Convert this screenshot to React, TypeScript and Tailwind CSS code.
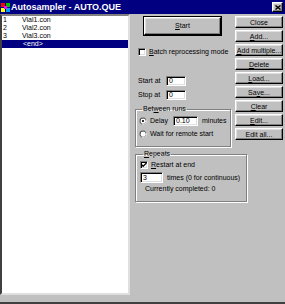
import React from 'react';

const font = { fontFamily: '"Liberation Sans", Arial, sans-serif' };

const bevel =
  'bg-[#c0c0c0] border border-t-white border-l-white border-r-black border-b-black shadow-[inset_-1px_-1px_0_#808080,inset_1px_1px_0_#dfdfdf]';
const sunken =
  'bg-white border border-t-[#808080] border-l-[#808080] border-r-white border-b-white shadow-[inset_1px_1px_0_#000,inset_-1px_-1px_0_#dfdfdf]';

function Mn({ text, at }: { text: string; at: number }) {
  if (at < 0) return <>{text}</>;
  return (
    <>
      {text.slice(0, at)}
      <span className="underline underline-offset-[1px]">{text[at]}</span>
      {text.slice(at + 1)}
    </>
  );
}

function SideButton({ label, at }: { label: string; at: number }) {
  return (
    <button
      type="button"
      className={`${bevel} w-[48px] h-[12px] flex items-center justify-center text-[7px] leading-none text-black`}
    >
      <Mn text={label} at={at} />
    </button>
  );
}

function Check({ checked }: { checked?: boolean }) {
  return (
    <span className={`${sunken} w-[8px] h-[8px] shrink-0 flex items-center justify-center`}>
      {checked && (
        <svg width="6" height="6" viewBox="0 0 7 7">
          <path d="M0.5 3 L2.5 5 L6.5 1" stroke="#000" strokeWidth="1.5" fill="none" />
        </svg>
      )}
    </span>
  );
}

function Radio({ checked }: { checked?: boolean }) {
  return (
    <svg width="8" height="8" viewBox="0 0 12 12" className="shrink-0">
      <circle cx="6" cy="6" r="5.5" fill="#808080" />
      <circle cx="6.5" cy="6.5" r="5" fill="#fff" />
      <circle cx="6" cy="6" r="4.5" fill="#000" />
      <circle cx="6.4" cy="6.4" r="3.9" fill="#dfdfdf" />
      <circle cx="6" cy="6" r="3.6" fill="#fff" />
      {checked && <circle cx="6" cy="6" r="1.6" fill="#000" />}
    </svg>
  );
}

function Group({ title, at, className, children }: { title: string; at: number; className: string; children: React.ReactNode }) {
  return (
    <fieldset className={`border border-[#808080] shadow-[1px_1px_0_#fff,inset_1px_1px_0_#fff] ${className}`}>
      <legend className="ml-[3px] px-[1px] text-[7px] leading-[8px]">
        <Mn text={title} at={at} />
      </legend>
      {children}
    </fieldset>
  );
}

const rows = [
  { n: '1', name: 'Vial1.con' },
  { n: '2', name: 'Vial2.con' },
  { n: '3', name: 'Vial3.con' },
];

export default function App() {
  return (
    <div
      className="w-[285px] h-[304px] bg-[#c0c0c0] flex flex-col overflow-hidden text-black border-b-2 border-b-[#404040]"
      style={font}
    >
      <div className="h-[14px] bg-[#000080] flex items-center pl-[1px] pr-[2px] shrink-0">
        <svg width="9" height="9" viewBox="0 0 9 9" className="shrink-0">
          <rect x="0" y="0" width="4" height="4" fill="#ff0000" />
          <rect x="5" y="0" width="4" height="4" fill="#00c000" />
          <rect x="0" y="5" width="4" height="4" fill="#ffff00" />
          <rect x="5" y="5" width="4" height="4" fill="#00a0ff" />
          <rect x="3" y="3" width="3" height="3" fill="#ff00ff" />
        </svg>
        <span className="ml-[1px] text-white font-bold text-[9px] leading-none">Autosampler - AUTO.QUE</span>
        <span className="flex-1" />
        <span className={`${bevel} w-[11px] h-[10px] flex items-center justify-center`}>
          <svg width="6" height="5" viewBox="0 0 6 5">
            <path d="M0.5 0.5 L5.5 4.5 M5.5 0.5 L0.5 4.5" stroke="#000" strokeWidth="1.4" />
          </svg>
        </span>
      </div>

      <div className="flex flex-1 min-h-0 pb-[7px]">
        <div className="w-[130px] h-full bg-white border-2 border-t-[#808080] border-l-[#404040] border-r-[#dfdfdf] border-b-[#dfdfdf] text-[7px] leading-[8px]">
          {rows.map((r) => (
            <div key={r.n} className="h-[8px] flex">
              <span className="w-[20px] pl-[1px]">{r.n}</span>
              <span>{r.name}</span>
            </div>
          ))}
          <div className="h-[8px] flex bg-[#000080] text-white">
            <span className="w-[21px]" />
            <span>&lt;end&gt;</span>
          </div>
        </div>

        <div className="flex-1 flex flex-col text-[7px] leading-[8px]">
          <div className="flex">
            <div className="w-[105px] flex flex-col">
              <button
                type="button"
                className="mt-[2px] ml-[13px] w-[79px] h-[20px] border border-black flex"
              >
                <span className={`${bevel} flex-1 flex items-center justify-center text-[7px]`}>
                  <Mn text="Start" at={0} />
                </span>
              </button>
              <div className="mt-[11px] ml-[8px] flex items-center gap-[3px] h-[9px]">
                <Check />
                <span>
                  <Mn text="Batch reprocessing mode" at={0} />
                </span>
              </div>
              <div className="mt-[20px] ml-[8px] flex items-center h-[10px]">
                <span className="w-[28px]">Start at</span>
                <span className={`${sunken} w-[20px] h-[10px] pl-[2px] leading-[8px]`}>0</span>
              </div>
              <div className="mt-[4px] ml-[8px] flex items-center h-[10px]">
                <span className="w-[28px]">Stop at</span>
                <span className={`${sunken} w-[20px] h-[10px] pl-[2px] leading-[8px]`}>0</span>
              </div>
              <Group title="Between runs" at={3} className="mt-[5px] ml-[5px] w-[94px] h-[42px] px-[3px]">
                <div className="flex items-center h-[10px] mt-[3px]">
                  <Radio checked />
                  <span className="ml-[3px] w-[23px]">Delay</span>
                  <span className={`${sunken} w-[25px] h-[10px] pl-[2px] leading-[8px]`}>0.10</span>
                  <span className="ml-[4px]">minutes</span>
                </div>
                <div className="flex items-center h-[10px] mt-[3px]">
                  <Radio />
                  <span className="ml-[3px]">Wait for remote start</span>
                </div>
              </Group>
            </div>
            <div className="flex flex-col gap-[2px] pt-[2px]">
              <SideButton label="Close" at={-1} />
              <SideButton label="Add..." at={0} />
              <SideButton label="Add multiple..." at={0} />
              <SideButton label="Delete" at={0} />
              <SideButton label="Load..." at={0} />
              <SideButton label="Save..." at={2} />
              <SideButton label="Clear" at={0} />
              <SideButton label="Edit..." at={0} />
              <SideButton label="Edit all..." at={-1} />
            </div>
          </div>
          <Group title="Repeats" at={0} className="mt-[3px] ml-[5px] w-[112px] h-[52px] px-[4px]">
            <div className="flex items-center gap-[3px] h-[9px] mt-[2px]">
              <Check checked />
              <span>
                <Mn text="Restart at end" at={0} />
              </span>
            </div>
            <div className="flex items-center h-[11px] mt-[3px]">
              <span className={`${sunken} w-[23px] h-[11px] pl-[2px] leading-[9px]`}>3</span>
              <span className="ml-[4px]">times (0 for continuous)</span>
            </div>
            <div className="ml-[5px] mt-[2px]">Currently completed: 0</div>
          </Group>
        </div>
      </div>
    </div>
  );
}
